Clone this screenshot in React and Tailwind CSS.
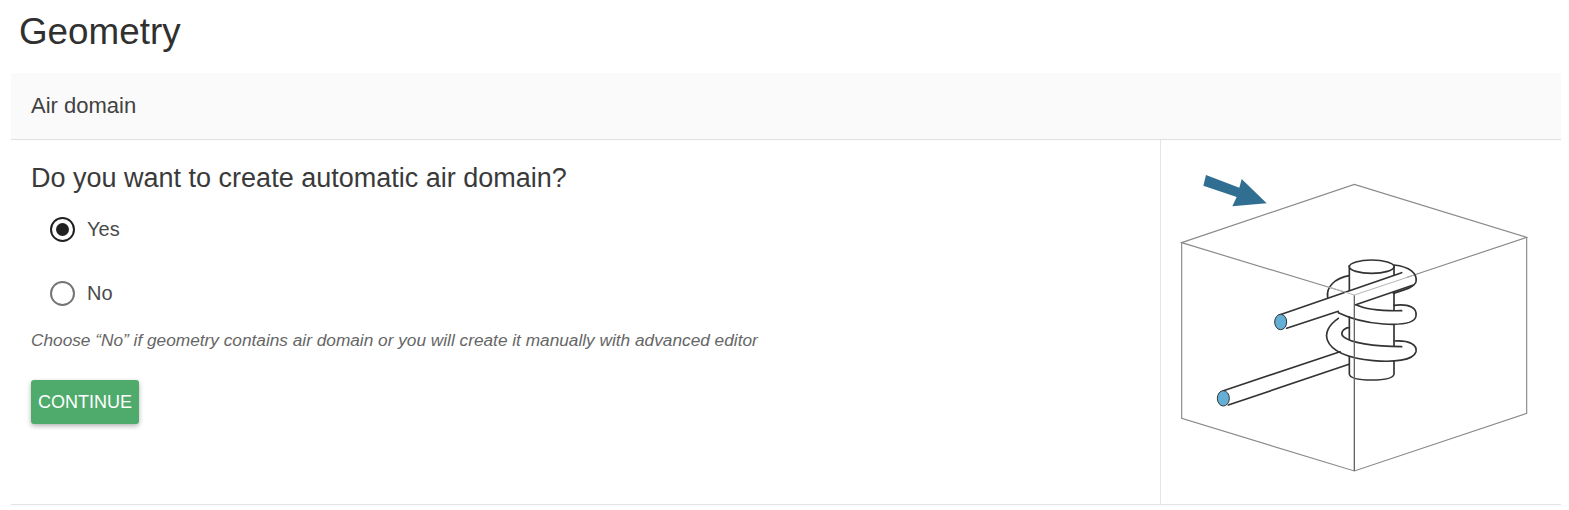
export default function App() {
  const boxLine = "#8a8a8a";
  const coil = "#333333";

  return (
    <div className="h-[510px] bg-white text-[#212121] font-['Liberation_Sans',Arial,sans-serif] overflow-hidden">
      <h1 className="pl-[19px] pt-[12px] h-[73px] text-[36.8px] leading-[40px] text-[#303030]">Geometry</h1>
      <div className="ml-[11px] mr-[8px] border-b border-[#e4e4e4]">
        <div className="h-[67px] bg-[#fafafa] border-b border-[#e0e0e0] pl-[20px] pb-[2px] flex items-center text-[22px] text-[#424242]">
          Air domain
        </div>
        <div className="flex h-[364px]">
          <div className="flex-1 pl-[20px] pt-[22px]">
            <p className="text-[27px] leading-[32px] text-[#3a3a3a]">Do you want to create automatic air domain?</p>
            <label className="flex items-center h-[26px] mt-[22px] ml-[19px] gap-[12px] text-[20px] text-[#4a4a4a]">
              <span className="w-[25px] h-[25px] rounded-full border-2 border-[#212121] flex items-center justify-center">
                <span className="w-[13px] h-[13px] rounded-full bg-[#212121]" />
              </span>
              Yes
            </label>
            <label className="flex items-center h-[26px] mt-[38px] ml-[19px] gap-[12px] text-[20px] text-[#4a4a4a]">
              <span className="w-[25px] h-[25px] rounded-full border-2 border-[#757575]" />
              No
            </label>
            <p className="mt-[24px] text-[17.25px] leading-[20px] italic text-[#666666]">
              Choose “No” if geometry contains air domain or you will create it manually with advanced editor
            </p>
            <button className="mt-[30px] h-[44px] w-[108px] rounded-[3px] bg-[#4fab6c] text-white text-[18px] shadow-[0_2px_5px_rgba(0,0,0,0.3)]">
              CONTINUE
            </button>
          </div>
          <div className="w-[401px] border-l border-[#e4e4e4] pt-[10px]">
            <svg width="400" height="340" viewBox="0 0 1200 1020" fill="none" className="-ml-px">
              {/* arrow */}
              <path d="M138 75 L238 113 L245 87 L320 160 L217 169 L230 141 L130 107 Z" fill="#306f92" />
              {/* air box */}
              <g stroke={boxLine} strokeWidth="3.5">
                <path d="M65 278 L583 103 L1100 262 L583 435 Z" />
                <path d="M65 278 L65 805 L583 963 L1100 790 L1100 262" />
              </g>
              {/* cylinder */}
              <g stroke={coil} strokeWidth="5">
                <path d="M568 345 L568 672 Q570 690 635 690 Q700 690 702 672 L702 345" />
                <ellipse cx="635" cy="350" rx="67" ry="20" fill="#fff" />
              </g>
              {/* coil turns, white tube fill first */}
              <path d="M702 466 C750 460 772 475 768 498 C765 520 720 525 670 522 C620 518 570 505 535 480 L590 460 C620 480 670 483 725 482 Z" fill="#fff" />
              <path d="M535 505 C505 525 495 550 502 570 C515 605 570 625 640 632 C700 637 760 632 768 605 C772 585 750 570 702 573 L725 590 C640 590 570 578 550 560 C540 550 548 535 568 532 Z" fill="#fff" />
              <g stroke={coil} strokeWidth="5" strokeLinecap="round">
                <path d="M503 442 C498 410 525 385 567 377" />
                <path d="M702 345 C750 350 772 370 768 395 C765 410 740 418 700 430" />
                <path d="M590 465 C620 480 670 483 725 482" />
                <path d="M702 466 C750 460 772 475 768 498 C765 520 720 525 670 522 C620 518 570 505 535 488" />
                <path d="M535 505 C505 525 495 550 502 570 C515 605 570 625 640 632 C700 637 760 632 768 605 C772 585 750 570 702 573" />
                <path d="M568 532 C548 535 540 550 550 560 C570 578 640 590 725 590" />
              </g>
              {/* upper lead */}
              <path d="M358 495 L725 368 L760 405 L380 535 Z" fill="#fff" />
              <g stroke={coil} strokeWidth="5" strokeLinecap="round">
                <path d="M358 495 L725 368" />
                <path d="M380 535 L535 484" />
                <path d="M585 465 L760 405" />
              </g>
              <ellipse cx="362" cy="516" rx="18" ry="23" fill="#65afd6" stroke={coil} strokeWidth="3" />
              {/* lower lead */}
              <g stroke={coil} strokeWidth="5" strokeLinecap="round">
                <path d="M190 722 L540 605" />
                <path d="M205 765 L567 643" />
              </g>
              <ellipse cx="190" cy="745" rx="18" ry="23" fill="#65afd6" stroke={coil} strokeWidth="3" />
              {/* front edge of box, over the coil */}
              <path d="M583 435 L583 963" stroke="#666666" strokeWidth="4" />
              <path d="M503 410 L583 435 L760 376" stroke="#b5b5b5" strokeWidth="3" />
            </svg>
          </div>
        </div>
      </div>
    </div>
  );
}
